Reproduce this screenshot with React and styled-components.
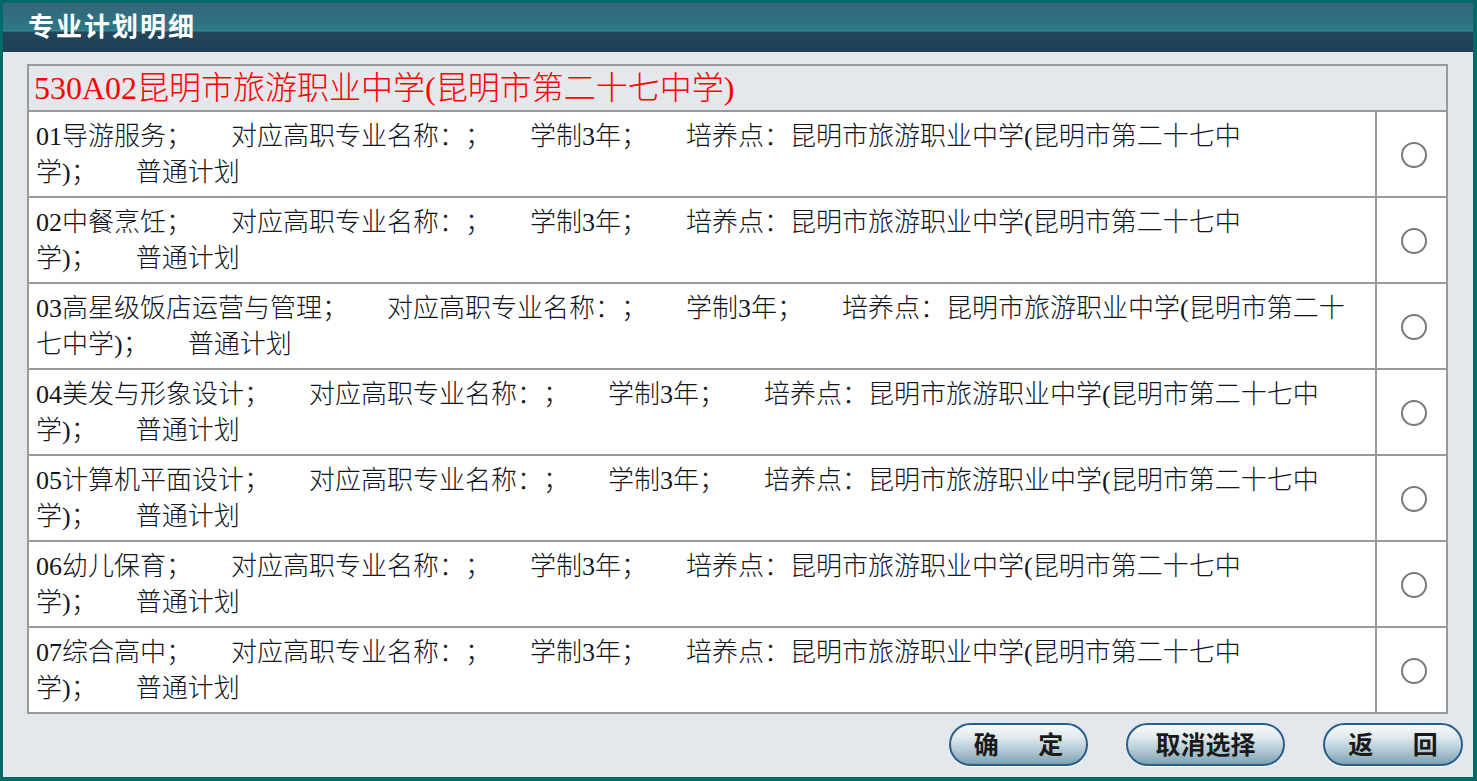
import React, { useState } from "react";
import styled, { createGlobalStyle } from "styled-components";

const SCHOOL = "昆明市旅游职业中学(昆明市第二十七中学)";
const GAP = "\u00a0".repeat(6);
const MAJORS = [
  { code: "01", name: "导游服务" },
  { code: "02", name: "中餐烹饪" },
  { code: "03", name: "高星级饭店运营与管理" },
  { code: "04", name: "美发与形象设计" },
  { code: "05", name: "计算机平面设计" },
  { code: "06", name: "幼儿保育" },
  { code: "07", name: "综合高中" },
];

const GlobalStyle = createGlobalStyle`
  html, body {
    margin: 0;
    padding: 0;
    background: #e4e7eb;
  }
  * {
    box-sizing: border-box;
  }
`;

const Frame = styled.div`
  width: 1477px;
  height: 781px;
  border: 3px solid #05696a;
  border-right-width: 4px;
  border-bottom-width: 4px;
  background: #e4e7eb;
  display: flex;
  flex-direction: column;
  font-family: "Liberation Serif", "Noto Sans CJK SC", serif;
  text-spacing-trim: space-all;
`;

const TitleBar = styled.div`
  height: 49px;
  display: flex;
  align-items: flex-start;
  padding: 4px 0 0 25px;
  background: linear-gradient(
    to bottom,
    #35667a 0px,
    #2c7784 26px,
    #3a8893 28px,
    #21465c 29px,
    #1e3f55 100%
  );
`;

const Title = styled.h1`
  margin: 0;
  color: #ffffff;
  font-family: "Noto Sans CJK SC", sans-serif;
  font-size: 26px;
  font-weight: 700;
  letter-spacing: 2px;
  line-height: 36px;
`;

const Body = styled.div`
  padding: 12px 10px 0 24px;
  display: flex;
  flex-direction: column;
`;

const Table = styled.div`
  margin-right: 15px;
  border: 2px solid #999999;
  border-bottom: none;
`;

const SchoolRow = styled.div`
  height: 46px;
  display: flex;
  align-items: center;
  padding: 0 0 6px 5px;
  border-bottom: 2px solid #999999;
  color: #ff0000;
  font-size: 32px;
  font-weight: 300;
`;

const Row = styled.div`
  height: 86px;
  display: flex;
  background: #ffffff;
  border-bottom: 2px solid #999999;
`;

const TextCell = styled.div`
  flex: 1;
  display: flex;
  align-items: center;
  padding: 2px 19px 0 7px;
  color: #11151c;
  font-size: 26px;
  font-weight: 300;
  line-height: 36px;
`;

const RadioCell = styled.div`
  width: 71px;
  display: flex;
  align-items: center;
  justify-content: center;
  border-left: 2px solid #999999;
`;

const Radio = styled.input.attrs({ type: "radio" })`
  appearance: none;
  margin: 2px 0 0 4px;
  width: 26px;
  height: 26px;
  border-radius: 50%;
  border: 2px solid #7a7a7a;
  background: #ffffff;
  cursor: pointer;

  &:checked {
    background: radial-gradient(circle, #333 0 5px, #fff 6px);
  }
`;

const Actions = styled.div`
  display: flex;
  justify-content: flex-end;
  gap: 38px;
  margin-top: 9px;
`;

const Button = styled.button`
  width: ${(props) => props.$width}px;
  height: 43px;
  border-radius: 22px;
  border: 2px solid #2a5f8e;
  background: linear-gradient(
    to bottom,
    #f6f9fb 0%,
    #e2ebef 30%,
    #b9ced8 60%,
    #7ea2b3 100%
  );
  box-shadow: 0 1px 0 #ffffff;
  color: #1a1a1a;
  font-family: "Noto Sans CJK SC", sans-serif;
  font-size: 25px;
  font-weight: 700;
  line-height: 1;
  padding: 0 0 2px;
  white-space: pre;
  cursor: pointer;
`;

const App = () => {
  const [picked, setPicked] = useState(null);

  return (
    <Frame>
      <GlobalStyle />
      <TitleBar>
        <Title>专业计划明细</Title>
      </TitleBar>
      <Body>
        <Table>
          <SchoolRow>530A02{SCHOOL}</SchoolRow>
          {MAJORS.map((m) => (
            <Row key={m.code}>
              <TextCell>
                <span>
                  {m.code}
                  {m.name}；{GAP}对应高职专业名称：；{GAP}学制3年；{GAP}培养点：
                  {SCHOOL}；{GAP}普通计划
                </span>
              </TextCell>
              <RadioCell>
                <Radio
                  name="major"
                  checked={picked === m.code}
                  onChange={() => setPicked(m.code)}
                />
              </RadioCell>
            </Row>
          ))}
        </Table>
        <Actions>
          <Button $width={139}>{"确       定"}</Button>
          <Button $width={159} onClick={() => setPicked(null)}>
            取消选择
          </Button>
          <Button $width={140}>{"返       回"}</Button>
        </Actions>
      </Body>
    </Frame>
  );
};

export default App;
